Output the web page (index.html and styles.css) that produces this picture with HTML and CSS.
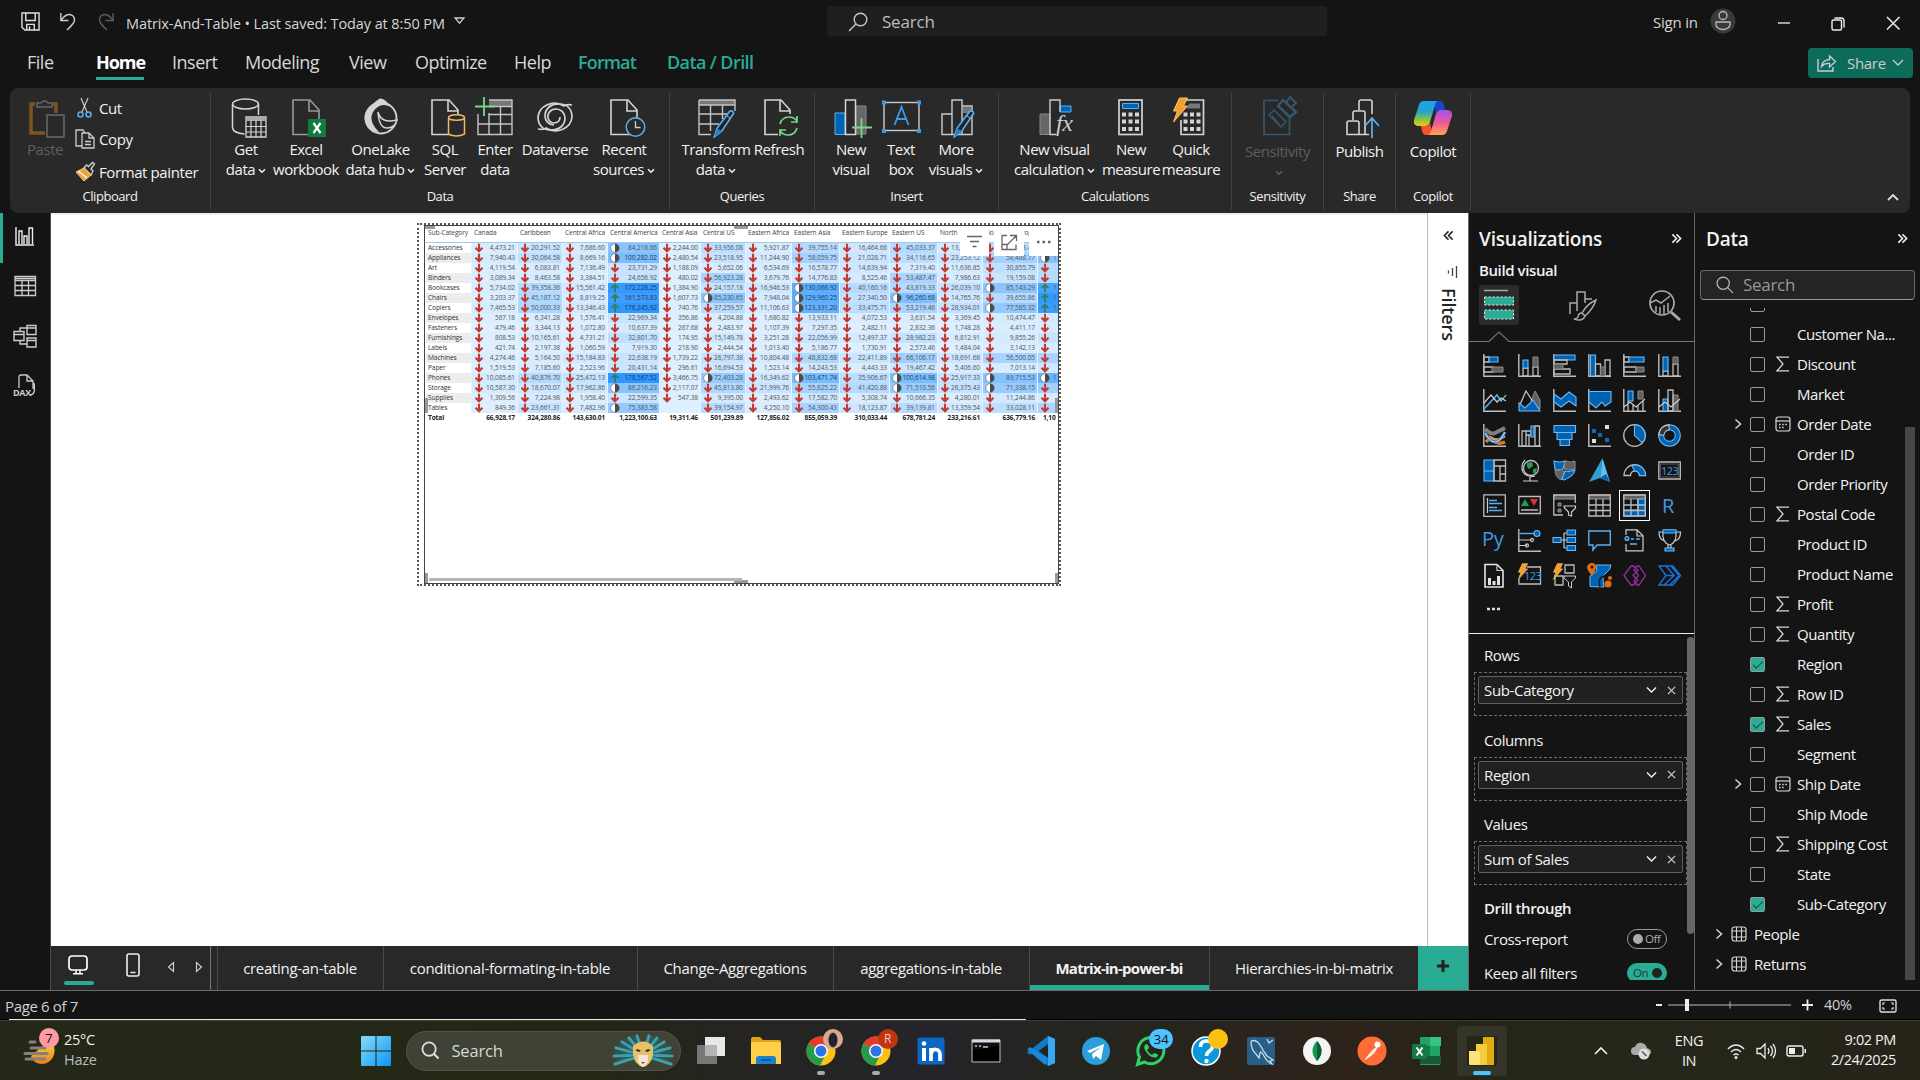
FILE: index.html
```html
<!DOCTYPE html>
<html lang="en">
<head>
<meta charset="utf-8">
<title>Matrix-And-Table</title>
<link rel="stylesheet" href="styles.css">
</head>
<body>
<svg class="defs" aria-hidden="true">
  <symbol id="doc" viewBox="0 0 40 40"><path d="M7 2h17l9 10v24.500H7zM23 2v11h10" fill="none" stroke="currentColor" stroke-width="1.600"/></symbol>
  <symbol id="chev" viewBox="0 0 8 6"><path d="M1 1.300l3 3 3-3" fill="none" stroke="currentColor" stroke-width="1.500"/></symbol>
  <symbol id="chevthin" viewBox="0 0 12 8"><path d="M1 1.300l5 5 5-5" fill="none" stroke="currentColor" stroke-width="1.500"/></symbol>
  <symbol id="sigma" viewBox="0 0 16 16"><path d="M14 1.200H2l6 6.800-6 6.800h12" fill="none" stroke="#d6d6d6" stroke-width="1.300"/></symbol>
  <symbol id="cal" viewBox="0 0 16 16"><rect x="1" y="1" width="14" height="14" rx="2.500" fill="none" stroke="#d6d6d6" stroke-width="1.200"/><path d="M1 5h14" stroke="#d6d6d6" stroke-width="1.200"/><path d="M4 8.500h8M4 11.500h6" stroke="#d6d6d6" stroke-width="1.500" stroke-dasharray="1.600 1.500"/></symbol>
  <symbol id="tbl" viewBox="0 0 16 16"><rect x="1" y="1" width="14" height="14" rx="2.500" fill="none" stroke="#d6d6d6" stroke-width="1.200"/><path d="M1 5h14M1 11h14M5.500 1v14M10.500 1v14" stroke="#d6d6d6" stroke-width="1.100"/></symbol>
  <symbol id="right" viewBox="0 0 8 12"><path d="M1.500 1.500L6.500 6l-5 4.500" fill="none" stroke="#d6d6d6" stroke-width="1.500"/></symbol>
  <symbol id="dbl" viewBox="0 0 12 12"><path d="M1.500 1.500L6 6l-4.500 4.500M6 1.500L10.500 6 6 10.500" fill="none" stroke="currentColor" stroke-width="1.700"/></symbol>
  <symbol id="x" viewBox="0 0 10 10"><path d="M1 1l8 8M9 1L1 9" stroke="#d0d0d0" stroke-width="1.300"/></symbol>
  <symbol id="axis" viewBox="0 0 23 23"><path d="M.8 0v22.200H23" fill="none" stroke="#bdbdbd" stroke-width="1.400"/></symbol>
  <symbol id="pencil" viewBox="0 0 20 27"><path d="M1 26l2.500-8L15 2.500Q18 .5 19 4L8 20.500z" fill="#222" stroke="#5ab0ee" stroke-width="1.500"/><path d="M1 26l2.500-8L8 20.500z" fill="#1d7fd0"/><path d="M12 6l4 3" stroke="#5ab0ee"/></symbol>
  <symbol id="bolt" viewBox="0 0 16 26"><path d="M7 1h8l-4 8h4L1 25l4-11H1z" fill="#f0a030" stroke="#ffc56b" stroke-width="1"/></symbol>
  <symbol id="down" viewBox="0 0 10 10"><path d="M5 .8v7.500M1.500 4.800L5 8.300l3.500-3.500" fill="none" stroke="#c23a31" stroke-width="2.100"/></symbol>
  <symbol id="up" viewBox="0 0 10 10"><path d="M5 9.200V1.700M1.500 5.200L5 1.700l3.500 3.500" fill="none" stroke="#2f8055" stroke-width="1.800"/></symbol>
  <symbol id="half" viewBox="0 0 10 10"><circle cx="5" cy="5" r="4.300" fill="#fff" stroke="#666" stroke-width=".6"/><path d="M5 .7a4.300 4.300 0 0 1 0 8.600z" fill="#4a4a4a"/></symbol>
  <symbol id="chrome" viewBox="0 0 30 30"><circle cx="15" cy="15" r="14.500" fill="#fbc116"/><path d="M15 15L2.400 7.700A14.500 14.500 0 0 1 27.600 7.700z" fill="#e33b2e"/><path d="M15 15L2.400 7.700A14.500 14.500 0 0 0 14 29.500l6-12z" fill="#259b4d"/><circle cx="15" cy="15" r="7" fill="#fff"/><circle cx="15" cy="15" r="5.500" fill="#2a74e8"/></symbol>
</svg>

<header class="titlebar">
  <svg class="t-save" viewBox="0 0 20 20"><path d="M1 1h18v18H4l-3-3zM5 1v8h10V1M6 19v-6h8v6M9 15v4" fill="none" stroke="#ddd" stroke-width="1.500"/></svg>
  <svg class="t-undo" viewBox="0 0 18 20"><path d="M1.500 1v8h8M1.500 9C5 3 10 1 14 4c5 5-1 10-6 15" fill="none" stroke="#ccc" stroke-width="1.500"/></svg>
  <svg class="t-undo flip" viewBox="0 0 18 20"><path d="M1.500 1v8h8M1.500 9C5 3 10 1 14 4c5 5-1 10-6 15" fill="none" stroke="#5e5e5e" stroke-width="1.500"/></svg>
  <span class="t-name">Matrix-And-Table • Last saved: Today at 8:50 PM</span>
  <svg class="t-tri" viewBox="0 0 10 7"><path d="M1 .8h8L5 5.500z" fill="none" stroke="#ccc" stroke-width="1.200"/></svg>
  <div class="t-search"><svg viewBox="0 0 20 20"><circle cx="12.500" cy="7.500" r="6.300" fill="none" stroke="#c8c8c8" stroke-width="1.400"/><path d="M8 12l-7 7" stroke="#c8c8c8" stroke-width="1.400"/></svg>Search</div>
  <span class="t-sign">Sign in</span>
  <svg class="t-user" viewBox="0 0 26 26"><circle cx="13" cy="13" r="12.500" fill="#3a3a3a"/><circle cx="13" cy="7.500" r="4" fill="none" stroke="#bbb" stroke-width="1.300"/><path d="M6 14h14v2.500a7 5 0 0 1-14 0z" fill="none" stroke="#bbb" stroke-width="1.300"/></svg>
  <svg class="t-win" viewBox="0 0 124 16"><path d="M1 8h12" stroke="#eee" stroke-width="1.300"/><rect x="55" y="5" width="9.500" height="10" rx="1.500" fill="none" stroke="#eee" stroke-width="1.400"/><path d="M57.500 3h6.500q3 0 3 3v6.500" fill="none" stroke="#eee" stroke-width="1.400"/><path d="M110 2l12.500 12.500M122.500 2L110 14.500" stroke="#eee" stroke-width="1.500"/></svg>
</header>

<nav class="menubar">
  <span class="m-file">File</span><span class="m-home">Home</span><span class="m-insert">Insert</span><span class="m-modeling">Modeling</span><span class="m-view">View</span><span class="m-opt">Optimize</span><span class="m-help">Help</span><span class="m-format">Format</span><span class="m-drill">Data / Drill</span>
  <div class="share"><svg viewBox="0 0 20 18"><path d="M1 5v12h15v-4" fill="none" stroke="#ccd" stroke-width="1.400"/><path d="M4.500 12.500q1-6.500 8-7V2l6 5.500-6 5.500V9.500q-5-.5-8 3z" fill="none" stroke="#ccd" stroke-width="1.300"/></svg>Share<svg class="sh-chev" viewBox="0 0 12 8"><path d="M1 1l5 5 5-5" fill="none" stroke="#ccc" stroke-width="1.300"/></svg></div>
</nav>

<section class="ribbon">
  <div class="group g-clip">
    <div class="clip">
      <div class="rb dim"><svg viewBox="0 0 40 40"><path d="M10 6H6v29h14M28 6h3v9" fill="none" stroke="#7c5420" stroke-width="3.500"/><path d="M12 9V5h4a4 4 0 0 1 7 0h4v4z" fill="#2b2b2b" stroke="#666" stroke-width="1.500"/><rect x="22" y="17" width="17" height="22" fill="#292929" stroke="#666" stroke-width="1.600"/></svg><span>Paste</span></div>
      <div class="clip-list">
        <div><svg viewBox="0 0 20 20"><path d="M6 0l6 14M13 0L7 14" stroke="#ccc" stroke-width="1.200"/><circle cx="5.500" cy="16.500" r="2.500" fill="none" stroke="#5ab0ee" stroke-width="1.500"/><circle cx="13.500" cy="16.500" r="2.500" fill="none" stroke="#5ab0ee" stroke-width="1.500"/></svg>Cut</div>
        <div><svg viewBox="0 0 20 20"><path d="M7 17H1V1h7l2 3" fill="none" stroke="#ccc" stroke-width="1.300"/><path d="M7 4h7l5 5v10H7zM14 4v5h5M10 12.500h6M10 15.500h6" fill="none" stroke="#ccc" stroke-width="1.300"/></svg>Copy</div>
        <div><svg viewBox="0 0 20 20"><path d="M9 6l7 7 2-4-2-2 3.500-5-2-1.500-4 4-2-1.500z" fill="none" stroke="#ccc" stroke-width="1.400"/><path d="M9 6l7 7-7 6-8-9z" fill="#e8a33c" stroke="#f5cf86"/><path d="M3 9l9 7" stroke="#fbe6b8" stroke-width="2"/></svg>Format painter</div>
      </div>
    </div>
    <footer>Clipboard</footer>
  </div>
  <div class="group g-data">
    <div class="btns">
      <div class="rb"><svg viewBox="0 0 40 40"><g fill="none" stroke="#d4d4d4" stroke-width="1.500"><ellipse cx="19.500" cy="6" rx="13" ry="5"/><path d="M6.500 6v24q1 5 12 6M32.500 6v11"/></g><path d="M20 19h20v20H20z" fill="#292929" stroke="#d4d4d4" stroke-width="1.300"/><path d="M20 21h20" stroke="#aaa" stroke-width="4"/><path d="M20 28.500h20M20 34h20M25 22v17M30 22v17M35 22v17" stroke="#d4d4d4" stroke-width="1.200"/></svg><span>Get<br>data<svg class="chev"><use href="#chev"/></svg></span></div>
      <div class="rb"><svg viewBox="0 0 40 40"><use href="#doc" color="#999"/><rect x="22" y="21" width="18" height="18" fill="#107c41"/><path d="M27.500 25l7 10M34.500 25l-7 10" stroke="#fff" stroke-width="2.200"/></svg><span>Excel<br>workbook</span></div>
      <div class="rb"><svg viewBox="0 0 40 40"><circle cx="20" cy="20" r="15.500" fill="none" stroke="#d4d4d4" stroke-width="1.800"/><path d="M12 6Q18 0 20 .500q6 1 8 8Q19 4 12 14q-5 9 6 20Q5 34 3.500 20 4 11 12 6z" fill="#d4d4d4"/><path d="M17 14q1 16 9 16t10-8Q20 26 17 14z" fill="#292929" stroke="#d4d4d4" stroke-width="1.500"/></svg><span>OneLake<br>data hub<svg class="chev"><use href="#chev"/></svg></span></div>
      <div class="rb"><svg viewBox="0 0 40 40"><use href="#doc" color="#d4d4d4"/><path d="M23.500 20v16q8 4 16 0V20" fill="#292929" stroke="#f0b56a" stroke-width="1.500"/><ellipse cx="31.500" cy="19.500" rx="8" ry="2.800" fill="#292929" stroke="#f0b56a" stroke-width="1.500"/></svg><span>SQL<br>Server</span></div>
      <div class="rb"><svg viewBox="0 0 40 40"><path d="M14 2h23v6H14z" fill="#777"/><path d="M14 2h23v34.500H3V16M14 8.500h23M14 16.500h23M3 26h34M14 15v21.500M25.500 8v28" fill="none" stroke="#c4c4c4" stroke-width="1.400"/><path d="M9-1v19M0 8.500h19" stroke="#76d883" stroke-width="1.800"/></svg><span>Enter<br>data</span></div>
      <div class="rb"><svg viewBox="0 0 40 40"><g fill="none" stroke="#d4d4d4" stroke-width="1.700"><path d="M37 7q-6-1-8 1C18 1 4 8 3 19c0 8 5 13 12 13 9 1 15-5 15-12 0-5-4-9-9-9-6 0-9 5-8 9 1 3 3 5 6 5 4 0 6-3 6-6"/><path d="M3 31q6 1 8-1c11 7 25 0 26-11 0-8-5-13-12-13-9-1-15 5-15 12 0 5 4 9 9 9"/></g></svg><span>Dataverse</span></div>
      <div class="rb"><svg viewBox="0 0 40 40"><use href="#doc" color="#d4d4d4"/><circle cx="31.500" cy="29" r="9.300" fill="#292929" stroke="#5ab0ee" stroke-width="1.500"/><path d="M31.500 23v6.500h5" fill="none" stroke="#ccc" stroke-width="1.300"/></svg><span>Recent<br>sources<svg class="chev"><use href="#chev"/></svg></span></div>
    </div>
    <footer>Data</footer>
  </div>
  <div class="group g-query">
    <div class="btns">
      <div class="rb"><svg viewBox="0 0 40 40"><path d="M3 2h36v5H3z" fill="#777"/><path d="M3 2h36v5M3 2v34.500h12M3 7h36v6M3 16h29M3 26h20M14.500 7v26M26.500 7v14" fill="none" stroke="#c4c4c4" stroke-width="1.400"/><use href="#pencil" x="14" y="11" width="28" height="29"/></svg><span>Transform<br>data<svg class="chev"><use href="#chev"/></svg></span></div>
      <div class="rb"><svg viewBox="0 0 40 40"><path d="M19 36.500H6V2h16l9 10v4M21 2v11h10" fill="none" stroke="#d4d4d4" stroke-width="1.600"/><path d="M21 26q2-7 9-7 5 0 8 4v-5m0 6h-6M38 30q-2 7-9 7-5 0-8-4v5m0-6h6" fill="none" stroke="#76d883" stroke-width="1.700"/></svg><span>Refresh</span></div>
    </div>
    <footer>Queries</footer>
  </div>
  <div class="group g-insert">
    <div class="btns">
      <div class="rb"><svg viewBox="0 0 40 40"><path d="M4 15h10v21.500H4z" fill="#0063b1" stroke="#5ab0ee"/><path d="M25 8h10v28H25z" fill="#666" stroke="#888"/><path d="M14.500 2h10v34.500h-10z" fill="#292929" stroke="#d4d4d4" stroke-width="1.500"/><path d="M30.500 20v20M21 29.500h20" stroke="#76d883" stroke-width="1.800"/></svg><span>New<br>visual</span></div>
      <div class="rb"><svg viewBox="0 0 40 40"><rect x="3" y="4.500" width="35" height="28" fill="none" stroke="#ccc" stroke-width="1.400"/><path d="M1 2.500h4v4H1zM36 2.500h4v4h-4zM1 31h4v4H1zM36 31h4v4h-4z" fill="#3c9be6"/><path d="M13.500 27L20.500 9l7 18M16 21h9" fill="none" stroke="#3c9be6" stroke-width="1.800"/></svg><span>Text<br>box</span></div>
      <div class="rb"><svg class="shift" viewBox="0 0 40 40"><path d="M4 16h10v20.500H4zM14 2h10v34.500H14zM24 8h10v28.500H24" fill="none" stroke="#ccc" stroke-width="1.400"/><path d="M25 9h8v6h-8z" fill="#777"/><use href="#pencil" x="12" y="11" width="28" height="29"/></svg><span>More<br>visuals<svg class="chev"><use href="#chev"/></svg></span></div>
    </div>
    <footer>Insert</footer>
  </div>
  <div class="group g-calc">
    <div class="btns">
      <div class="rb"><svg viewBox="0 0 40 40"><path d="M5 16h10v20.500H5z" fill="#666" stroke="#888"/><path d="M25 8h11v6H25z" fill="#0063b1" stroke="#5ab0ee"/><path d="M25 14V2H15v34.500h6" fill="none" stroke="#ccc" stroke-width="1.400"/><text x="21" y="33" class="fx">fx</text></svg><span>New visual<br>calculation<svg class="chev"><use href="#chev"/></svg></span></div>
      <div class="rb"><svg viewBox="0 0 40 40"><rect x="8" y="2" width="23" height="34.500" fill="none" stroke="#d4d4d4" stroke-width="1.700"/><path d="M11.500 5.500h16v5h-16z" fill="#0063b1" stroke="#5ab0ee"/><path d="M11 16.500h18M11 23.500h18M11 31h18" stroke="#d4d4d4" stroke-width="4" stroke-dasharray="4 2.500"/></svg><span>New<br>measure</span></div>
      <div class="rb"><svg viewBox="0 0 40 40"><path d="M15 2h17.500v34.500H10V22" fill="none" stroke="#d4d4d4" stroke-width="1.700"/><path d="M18 5.500h11v5H16z" fill="#777"/><path d="M12.500 16.500h18M12.500 23.500h18M12.500 31h18" stroke="#d4d4d4" stroke-width="4" stroke-dasharray="4 2.500"/><use href="#bolt" x="1" y="-1" width="17" height="26"/></svg><span>Quick<br>measure</span></div>
    </div>
    <footer>Calculations</footer>
  </div>
  <div class="group g-sens">
    <div class="btns">
      <div class="rb dim low"><svg viewBox="0 0 40 40"><path d="M21 2.500H7v34h25.500V20" fill="none" stroke="#35566d" stroke-width="1.700"/><path d="M12 17l5-5 12 12-5 5zM15 18l7 8" fill="none" stroke="#35566d" stroke-width="1.500"/><path d="M21 8l5-6 13 12-6 5z" fill="none" stroke="#35566d" stroke-width="2.500"/><path d="M29 5l4-6 6 6-5 5" fill="none" stroke="#35566d" stroke-width="2"/></svg><span>Sensitivity<br><svg class="chev"><use href="#chev"/></svg></span></div>
    </div>
    <footer>Sensitivity</footer>
  </div>
  <div class="group g-share">
    <div class="btns">
      <div class="rb low"><svg viewBox="0 0 40 40"><g fill="none" stroke="#d4d4d4" stroke-width="1.600"><path d="M29 36.500H7V25q0-2 2-2h8q2 0 2 2v11M13 22v-7q0-2 2-2h8q2 0 2 2v21M19 12V4q0-2 2-2h9q2 0 2 2v12"/></g><path d="M32 40V20M25 28l7-8 7 8" fill="none" stroke="#5ab0ee" stroke-width="1.700"/></svg><span>Publish</span></div>
    </div>
    <footer>Share</footer>
  </div>
  <div class="group g-cop">
    <div class="btns">
      <div class="rb low"><svg viewBox="0 0 40 40"><defs><linearGradient id="c1" x1="0" y1="0" x2="0" y2="1"><stop offset="0" stop-color="#18a4f0"/><stop offset=".45" stop-color="#2ba3c9"/><stop offset=".75" stop-color="#8cc63f"/><stop offset="1" stop-color="#f2c811"/></linearGradient><linearGradient id="c2" x1="0" y1="0" x2="0" y2="1"><stop offset="0" stop-color="#9a55f0"/><stop offset=".5" stop-color="#f0569a"/><stop offset="1" stop-color="#ffa64c"/></linearGradient></defs><path d="M20 3h7q3 0 4 4l1 5h-4q-4 0-5 3z" fill="#1746c8"/><path d="M20 37h-7q-3 0-4-4l-1-5h5q3 0 4-3z" fill="#f5532d"/><path d="M11 3h14q-2 0-3 4l-5 17q-1 4-5 4H6q-6 0-5-6L6 7q1-4 5-4z" fill="url(#c1)"/><path d="M29 37H15q2 0 3-4l5-17q1-4 5-4h6q6 0 5 6l-5 15q-1 4-5 4z" fill="url(#c2)"/></svg><span>Copilot</span></div>
    </div>
    <footer>Copilot</footer>
  </div>
  <div class="ribbon-end"><svg viewBox="0 0 12 8"><path d="M1 7l5-5 5 5" fill="none" stroke="#ddd" stroke-width="1.800"/></svg></div>
</section>

<main class="work">
  <aside class="rail">
    <div class="on"><svg viewBox="0 0 24 24"><path d="M3 3v18h18M6 20V7h3v13M11 20v-8h3v8M16 20V4h3.500v16" fill="none" stroke="#eee" stroke-width="1.400"/></svg></div>
    <div><svg viewBox="0 0 24 24"><path d="M2 2.500h20.500v19H2zM2 6.500h20M2 11.500h20M2 16.500h20M9 6.500v15M15.500 6.500v15M2 4.500h20" fill="none" stroke="#ccc" stroke-width="1.300"/></svg></div>
    <div><svg viewBox="0 0 24 24"><path d="M1 7.500h10v9H1zM14 1.500h9v9h-9zM14 14h9v9h-9zM1 10.500h10M14 4h9M14 16.500h9M7 7.500V4h7M7 16.500V20h7" fill="none" stroke="#ccc" stroke-width="1.400"/></svg></div>
    <div><svg viewBox="0 0 24 24"><path d="M6 14V3q0-2 2-2h6l6 6v8M14 1v6h6M21 9q2 12-4 12" fill="none" stroke="#ccc" stroke-width="1.300"/><text x="0" y="21.500" class="dax">DAX</text></svg></div>
  </aside>
  <div class="center">
    <div class="stage">
      <div class="canvas">
        <div class="visual">
          <div class="frame">
            <table class="matrix"><colgroup></colgroup><thead></thead><tbody></tbody></table>
            <i class="h tl"></i><i class="h tc"></i><i class="h ml"></i><i class="h mr"></i><i class="h bl"></i><i class="h bc"></i><i class="h br"></i><i class="hbar"></i>
            <div class="vtools">
              <span><svg viewBox="0 0 30 30"><path d="M7 10.500h15M10 15.500h9M12.500 20.500h4" stroke="#666" stroke-width="1.300"/></svg></span>
              <span><svg viewBox="0 0 30 30"><path d="M13 9.500H8v14h14v-5M8 18.500h5v5M16 9.500h6.500V15M22.500 9.500l-9 9" fill="none" stroke="#666" stroke-width="1.300"/></svg></span>
              <span><svg viewBox="0 0 30 30"><path d="M8 16h2.500M13.500 16H16M19 16h2.500" stroke="#666" stroke-width="2.500"/></svg></span>
            </div>
          </div>
        </div>
      </div>
      <aside class="filters"><svg class="f-col" viewBox="0 0 12 12"><use href="#dbl"/></svg><svg class="f-ico" viewBox="0 0 12 12"><path d="M10.500 0v12M6.500 2v8M2.500 4.500v3" stroke="#444" stroke-width="1.300"/></svg><b>Filters</b></aside>
    </div>
    <div class="tabs">
      <div class="views">
        <svg class="v-desk" viewBox="0 0 20 20"><rect x="1" y="1" width="18" height="14" rx="3" fill="none" stroke="#fff" stroke-width="1.700"/><path d="M5 18.700h10M8 15v3M12 15v3" stroke="#fff" stroke-width="1.500"/></svg>
        <svg class="v-phone" viewBox="0 0 14 24"><rect x="1" y="1" width="12" height="22" rx="2" fill="none" stroke="#eee" stroke-width="1.600"/><path d="M4.500 19.500h5" stroke="#eee" stroke-width="1.500"/></svg>
        <svg class="v-arr" viewBox="0 0 36 12"><path d="M6.500 1.500v9L1.500 6zM29.500 1.500v9l5-4.500z" fill="none" stroke="#ccc" stroke-width="1.200"/></svg>
      </div>
      <div class="tab">creating-an-table</div><div class="tab">conditional-formating-in-table</div><div class="tab">Change-Aggregations</div><div class="tab">aggregations-in-table</div><div class="tab active">Matrix-in-power-bi</div><div class="tab">Hierarchies-in-bi-matrix</div>
      <div class="add"><svg viewBox="0 0 14 14"><path d="M7 1v12M1 7h12" stroke="#222" stroke-width="3"/></svg></div>
    </div>
  </div>

  <aside class="viz">
    <div class="p-head"><h2>Visualizations</h2><svg><use href="#dbl"/></svg></div>
    <h3>Build visual</h3>
    <div class="modes">
      <div class="on"><svg viewBox="0 0 40 40"><path d="M5 5.500h24" stroke="#aaa" stroke-width="1.500"/><path d="M5.500 12h29v8h-29zM5.500 25h29v9h-29z" fill="#2aac94" stroke="#ddd" stroke-dasharray="2.500 1.500"/></svg></div>
      <div><svg viewBox="0 0 40 40"><path d="M7 29V18h7M14 26V7h8v11M22 14h7" fill="none" stroke="#aaa" stroke-width="1.500"/><path d="M33 15q-9 4-14 13l3 3q8-7 11-16zM19 28q-4 0-4 4-1 2-4 2 9 3 11-3" fill="#141414" stroke="#aaa" stroke-width="1.500"/></svg></div>
      <div><svg viewBox="0 0 40 40"><circle cx="17" cy="18" r="12" fill="none" stroke="#aaa" stroke-width="1.700"/><path d="M26 27l9 8" stroke="#aaa" stroke-width="3"/><path d="M5 18l6-3 5 3 9-7M11 27v-6M15 29v-7M19 29v-9M23 27v-9" fill="none" stroke="#aaa" stroke-width="1.500"/></svg></div>
    </div>
    <svg class="notch" viewBox="0 0 225 12"><path d="M0 10.500h20L30 1l10 9.500h185" fill="none" stroke="#777" stroke-width="1.100"/></svg>
    <div class="gallery">
      <svg viewBox="0 0 23 23"><use href="#axis"/><path class="o" d="M1 3h5v5H1zM1 13h9v5H1z"/><path class="b" d="M6 3h9v5H6z"/><path class="g" d="M9 13h11v5H9z"/></svg>
      <svg viewBox="0 0 23 23"><use href="#axis"/><path class="o" d="M5 14h5v8H5zM15 13h5v9h-5z"/><path class="b" d="M5 6h5v8H5z"/><path class="g" d="M15 3h5v10h-5z"/></svg>
      <svg viewBox="0 0 23 23"><use href="#axis"/><path class="b" d="M1 1h21v5H1z"/><path class="o" d="M1 6h13v4H1zM1 15h16v5H1z"/><path class="g" d="M1 10h9v5H1z"/></svg>
      <svg viewBox="0 0 23 23"><use href="#axis"/><path class="b" d="M2.500 1h5v21h-5z"/><path class="o" d="M7.500 10h5v12h-5zM17 6h5v16h-5z"/><path class="g" d="M12.500 13H17v9h-4.500z"/></svg>
      <svg viewBox="0 0 23 23"><use href="#axis"/><path class="o" d="M1 3h5v5H1zM1 13h12v5H1z"/><path class="b" d="M6 3h15v5H6z"/><path class="g" d="M13 13h8v5h-8z"/></svg>
      <svg viewBox="0 0 23 23"><use href="#axis"/><path class="o" d="M5 17h5v5H5zM15 10h5v12h-5z"/><path class="b" d="M5 3h5v14H5z"/><path class="g" d="M15 3h5v7h-5z"/></svg>

      <svg viewBox="0 0 23 23"><use href="#axis"/><path class="lb" d="M1 20l13-14 4 6 5-6"/><path class="lo" d="M1 14l7-8 6 7 4-4 5 3"/></svg>
      <svg viewBox="0 0 23 23"><path class="g" d="M17 2l5 9v9l-9-8z"/><path class="lo" d="M1 18L8 2l11 17"/><path class="b" d="M1 14l6 5 8-8 7 11H1z"/></svg>
      <svg viewBox="0 0 23 23"><use href="#axis"/><path class="b" d="M1 5l7 5 8-7 7 5v9l-7-5-8 6-7-5z"/></svg>
      <svg viewBox="0 0 23 23"><use href="#axis"/><path class="b" d="M1 2.500h22V13l-6 4-3-4-6 6-7-6z"/></svg>
      <svg viewBox="0 0 23 23"><use href="#axis"/><path class="b" d="M5 2h5v10H5z"/><path class="g" d="M15 2h5v8h-5z"/><path class="lo" d="M1 18l6-5 6 5 9-8M5 12v10M10 16v6M15 17v5M20 12v10"/></svg>
      <svg viewBox="0 0 23 23"><use href="#axis"/><path class="b" d="M5 10h5v12H5z"/><path class="g" d="M15 6h5v16h-5z"/><path class="o" d="M10 1h5v21h-5z"/><path class="lo" d="M1 18l6-5 6 5 9-8"/></svg>

      <svg viewBox="0 0 23 23"><use href="#axis"/><path d="M3 18q4-5 8-1t11 1" fill="none" stroke="#e67a14" stroke-width="3.500"/><path d="M3 12q4 1 8 3t11-3" fill="none" stroke="#f0a04a" stroke-width="2.500"/><path d="M2 5q6 6 10 4t10-5" fill="none" stroke="#808080" stroke-width="4"/><path d="M2 9q5 9 10 9t10-10" fill="none" stroke="#2880d0" stroke-width="3"/><path class="lo" d="M2 9q5 9 10 9t10-10"/></svg>
      <svg viewBox="0 0 23 23"><use href="#axis"/><path class="o" d="M4 7h4v15H4zM8 7h5v4H8zM17 2h4.500v20H17zM8 11h3v11"/><path class="b" d="M13 2h3v11h-3z"/></svg>
      <svg viewBox="0 0 23 23"><path class="b" d="M1 1.500h21.500v7H1zM4 8.500h15v7H4zM7 15.500h9.500v6H7z"/></svg>
      <svg viewBox="0 0 23 23"><use href="#axis"/><path d="M17 1h4v4h-4zM4 15h4v4H4z" fill="#ddd"/><path d="M4 5h4v4H4zM10 9h4v4h-4zM17 14h4v4h-4z" fill="#0a6ac0"/></svg>
      <svg viewBox="0 0 23 23"><circle class="o" cx="11.500" cy="11.500" r="10.800"/><path class="b" d="M11.500 11.500V.8a10.700 10.700 0 0 1 7.700 18z"/></svg>
      <svg viewBox="0 0 23 23"><circle cx="11.500" cy="11.500" r="8.300" fill="none" stroke="#6cb8f6" stroke-width="6"/><circle cx="11.500" cy="11.500" r="8.300" fill="none" stroke="#0063b1" stroke-width="4"/><path d="M3.200 11.500a8.300 8.300 0 0 1 8.300-8.300" fill="none" stroke="#ccc" stroke-width="6"/><path d="M3.500 10.500a8.300 8.300 0 0 1 7-7" fill="none" stroke="#333" stroke-width="4"/></svg>

      <svg viewBox="0 0 23 23"><path class="b" d="M1 1h10v11H1zM1 12h10v10H1z"/><path class="o" d="M11 1h11.500v6H11zM11 7h6v15h-6zM17 7h5.500v8H17zM17 15h5.500v7H17z"/></svg>
      <svg viewBox="0 0 23 23"><circle class="o" cx="13" cy="9" r="7.500"/><path d="M9 4l5-1 1 4-4 3-2-2zM15 10l4-1-1 5h-3z" fill="#269e4a"/><path class="lo" d="M7 1q-5 5-2 12 4 6 12 4M12 18v4M5 22h15"/></svg>
      <svg viewBox="0 0 23 23"><path class="b" d="M1 2q6 2 11 0l-2 8q-6 2-8 0z"/><path class="g" d="M12 2q6 2 10 0v8q-6 2-11 0zM2 11q4 2 7-1l3 5-4 6Q2 18 2 11z"/><path class="b" d="M12 12q5 1 10-1-1 6-11 10l-2-1z"/></svg>
      <svg viewBox="0 0 23 23"><path d="M14.500-1L1 23l11-4z" fill="#2f9fd0"/><path d="M14.500-1L22 23l-10-4z" fill="#5cc0ea"/><path d="M12 19l10 4-4-8z" fill="#0f5fa8"/></svg>
      <svg viewBox="0 0 23 23"><path class="o" d="M1 16.500a10.500 10.500 0 0 1 21.500 0h-6a4.500 4.500 0 0 0-9 0z"/><path class="b" d="M9 6.500a10.500 10.500 0 0 1 13.500 10h-6a4.500 4.500 0 0 0-5-4.500z"/></svg>
      <svg viewBox="0 0 23 23"><path class="o" d="M.8 3h21.500v17H.8z"/><path d="M2.500 5h18v13h-18z" fill="none" stroke="#555"/><text x="3" y="15.500" class="n">123</text></svg>

      <svg viewBox="0 0 23 23"><path class="o" d="M.8.800h21.500v21.500H.8z"/><path class="lo" d="M4.500 4v15"/><path class="lb" d="M6 6.500h8M6 9.500h13M6 13.500h8M6 16.500h13"/></svg>
      <svg viewBox="0 0 23 23"><path class="o" d="M.8 2.500h21.500v17H.8zM3 16h17"/><path d="M3 12l4-7 4 7z" fill="#1ea050"/><path d="M12 5h8l-4 7z" fill="#d83535"/></svg>
      <svg viewBox="0 0 23 23"><path class="g" d="M.8 1h21.500v4H.8z"/><path class="o" d="M10 21H.8V1h21.500v8"/><path class="g" d="M5 9h3v3H5zM5 15h3v3H5z"/><path class="lo" d="M11 12h11.500v2l-4 4v4l-3-1v-3l-4-4z"/></svg>
      <svg viewBox="0 0 23 23"><path class="g" d="M.8 1h21.500v4H.8z"/><path class="o" d="M.8 1h21.500v21H.8zM.8 11h21.500M.8 16.500h21.500M8 5v17M15 5v17"/></svg>
      <svg class="sel" viewBox="0 0 23 23"><path class="g" d="M.8 1h21.500v4H.8z"/><path class="b" d="M.8 16h14V5h7.500v17H.8z"/><path class="o" d="M.8 1h21.500v21H.8zM.8 11h21.500M.8 16.500h21.500M8 5v17M15 5v17"/></svg>
      <svg viewBox="0 0 23 23"><text x="4" y="18.500" class="big">R</text></svg>

      <svg class="wide" viewBox="0 0 23 23"><text x="-1" y="17" class="big">Py</text></svg>
      <svg viewBox="0 0 23 23"><use href="#axis"/><path class="lb" d="M2 4.500h14"/><path class="lo" d="M1 11h12M1 16.500h8"/><circle class="b" cx="19" cy="4.500" r="3"/><circle class="o" cx="14" cy="11" r="1.500"/><circle class="o" cx="9" cy="16.500" r="1.500"/></svg>
      <svg viewBox="0 0 23 23"><path class="lo" d="M8 11h6M11 4v15M11 4h4M11 19h4"/><path class="b" d="M0 8.500h8v5H0zM14 1h8.500v5H14zM14 8.500h8.500v5H14zM14 16.500h8.500v5H14z"/></svg>
      <svg viewBox="0 0 23 23"><path class="lb" d="M.8 2h21.500v14H9l-4 5v-5H.8z"/></svg>
      <svg viewBox="0 0 23 23"><path class="lo" d="M3 6V.8h11l6 6v15H3V15M14 1v6h6"/><path class="lb" d="M8 10h3m2 0h4M7 15h7"/><circle class="b" cx="4" cy="9.500" r="2"/></svg>
      <svg viewBox="0 0 23 23"><path class="lo" d="M5 3H1q0 8 6 9M18 3h4.500q0 8-6 9M5 3q-1 11 6.500 13Q19 14 18 3M10 16v3h3v-3"/><path class="b" d="M5 .8h13V4H5zM7 19h9v3H7z"/></svg>

      <svg viewBox="0 0 23 23"><path d="M2 .500h12l6 6V23H2z" fill="none" stroke="#e4e4e4" stroke-width="1.600"/><path class="lo" d="M14 .500v6h6"/><path d="M5 14h3v7H5zM9.500 17h3v4h-3zM14 12h3v9h-3z" fill="#e4e4e4"/></svg>
      <svg viewBox="0 0 23 23"><path class="o" d="M9 3h13.500v17H1v-5"/><text x="6" y="16" class="n">123</text><use href="#bolt" x="-1" y="-1" width="12" height="17"/></svg>
      <svg viewBox="0 0 23 23"><path class="o" d="M12 1h9v8h-9zM2 12h8v9H2z"/><use href="#bolt" x="-1" y="-1" width="12" height="17"/><path d="M11 12h11.500v2l-4 4v6l-3-2v-4l-4.500-4z" fill="#141414" stroke="#ccc"/></svg>
      <svg viewBox="0 0 23 23"><path d="M8 1h15q-1 6-5 8t-3 6l1 8-14-.500V12l7-5z" fill="#0063b1" stroke="#6cb8f6"/><path d="M12 23q-2-8 2-10 6-2 8-6" fill="none" stroke="#141414" stroke-width="1.500"/><path d="M4-1q4 0 4 4 0 3-4 9Q-1 6-1 3q1-4 5-4z" fill="#e66c0b"/><circle cx="4" cy="3" r="1.500" fill="#141414"/><circle cx="20" cy="20" r="3.500" fill="#e66c0b"/><circle cx="22" cy="14" r="2" fill="#e66c0b"/></svg>
      <svg viewBox="0 0 23 23"><path d="M8 2L1 11.500 8 21h2.500l4.500-5-5-4.500 5-5L10.500 2zM14 2l-3 4 4.500 5.500L11 17l3 4h2l6.500-9.500L16 2z" fill="none" stroke="#9a2fa0" stroke-width="1.300"/></svg>
      <svg viewBox="0 0 23 23"><path d="M1 2h14l7.500 9.500L15 21H1l7-9.500zM8 2l8 9.500L6 21M8 11.500h8M12 21l9-9.500M13 2l8 9.500" fill="none" stroke="#1673d6" stroke-width="1.400"/></svg>
      <svg viewBox="0 0 23 23"><path d="M4 10h3M9 10h3M14 10h3" stroke="#ddd" stroke-width="2.600"/></svg>
    </div>
    <div class="wells">
      <p>Rows</p>
      <div class="drop"><div>Sub-Category<svg class="c"><use href="#chevthin"/></svg><svg class="k"><use href="#x"/></svg></div></div>
      <p>Columns</p>
      <div class="drop"><div>Region<svg class="c"><use href="#chevthin"/></svg><svg class="k"><use href="#x"/></svg></div></div>
      <p>Values</p>
      <div class="drop"><div>Sum of Sales<svg class="c"><use href="#chevthin"/></svg><svg class="k"><use href="#x"/></svg></div></div>
      <p class="bold">Drill through</p>
      <div class="opt">Cross-report<span class="toggle"><i></i>Off</span></div>
      <div class="opt">Keep all filters<span class="toggle on">On<i></i></span></div>
      <i class="sbar"></i>
    </div>
  </aside>

  <aside class="data">
    <div class="p-head"><h2>Data</h2><svg><use href="#dbl"/></svg></div>
    <div class="d-search"><svg viewBox="0 0 20 20"><circle cx="8" cy="8" r="6.800" fill="none" stroke="#bbb" stroke-width="1.300"/><path d="M13 13l6 6" stroke="#bbb" stroke-width="1.300"/></svg>Search</div>
    <div class="fields">
      <div class="fld"><i class="cb"></i></div>
      <div class="fld"><i class="cb"></i><span>Customer Na...</span></div>
      <div class="fld"><i class="cb"></i><svg><use href="#sigma"/></svg><span>Discount</span></div>
      <div class="fld"><i class="cb"></i><span>Market</span></div>
      <div class="fld"><svg class="ex"><use href="#right"/></svg><i class="cb"></i><svg><use href="#cal"/></svg><span>Order Date</span></div>
      <div class="fld"><i class="cb"></i><span>Order ID</span></div>
      <div class="fld"><i class="cb"></i><span>Order Priority</span></div>
      <div class="fld"><i class="cb"></i><svg><use href="#sigma"/></svg><span>Postal Code</span></div>
      <div class="fld"><i class="cb"></i><span>Product ID</span></div>
      <div class="fld"><i class="cb"></i><span>Product Name</span></div>
      <div class="fld"><i class="cb"></i><svg><use href="#sigma"/></svg><span>Profit</span></div>
      <div class="fld"><i class="cb"></i><svg><use href="#sigma"/></svg><span>Quantity</span></div>
      <div class="fld"><i class="cb ck"></i><span>Region</span></div>
      <div class="fld"><i class="cb"></i><svg><use href="#sigma"/></svg><span>Row ID</span></div>
      <div class="fld"><i class="cb ck"></i><svg><use href="#sigma"/></svg><span>Sales</span></div>
      <div class="fld"><i class="cb"></i><span>Segment</span></div>
      <div class="fld"><svg class="ex"><use href="#right"/></svg><i class="cb"></i><svg><use href="#cal"/></svg><span>Ship Date</span></div>
      <div class="fld"><i class="cb"></i><span>Ship Mode</span></div>
      <div class="fld"><i class="cb"></i><svg><use href="#sigma"/></svg><span>Shipping Cost</span></div>
      <div class="fld"><i class="cb"></i><span>State</span></div>
      <div class="fld"><i class="cb ck"></i><span>Sub-Category</span></div>
      <div class="tab-row"><svg class="ex"><use href="#right"/></svg><svg><use href="#tbl"/></svg>People</div>
      <div class="tab-row"><svg class="ex"><use href="#right"/></svg><svg><use href="#tbl"/></svg>Returns</div>
      <i class="sbar"></i>
    </div>
  </aside>
</main>

<footer class="status"><span>Page 6 of 7</span>
  <svg class="zoomer" viewBox="0 0 160 20"><path d="M1 10h6M147 10h11M152.500 4.500v11" stroke="#eee" stroke-width="1.800"/><path d="M13 10h123M75 6.500v7" stroke="#bbb"/><path d="M30 4h4v12h-4z" fill="#eee"/></svg>
  <span class="pct">40%</span>
  <svg class="fit" viewBox="0 0 18 14"><rect x="1" y="1" width="16" height="12" rx="1.500" fill="none" stroke="#ddd" stroke-width="1.400"/><path d="M4 6V4h2M12 4h2v2M14 8v2h-2M6 10H4V8" fill="none" stroke="#ddd" stroke-width="1.200"/></svg>
</footer>

<footer class="taskbar">
  <div class="weather"><svg viewBox="0 0 36 36"><defs><linearGradient id="w" x1="0" y1="0" x2="0" y2="1"><stop offset="0" stop-color="#f5c53a"/><stop offset="1" stop-color="#f07a1a"/></linearGradient></defs><path d="M14 20q2-4 8-4h8q2 8-3 14-6 6-14 3-5-2-6-7z" fill="url(#w)"/><path d="M6 12h5M7 18h14M1 23.500h22M2 29h19" stroke="#85807a" stroke-width="3" stroke-linecap="round"/></svg><i class="badge pink">7</i><p>25°C<br><span>Haze</span></p></div>
  <svg class="k win" viewBox="0 0 29 29"><defs><linearGradient id="wl" x1="0" y1="0" x2="1" y2="1"><stop offset="0" stop-color="#86dcfb"/><stop offset="1" stop-color="#0a96f5"/></linearGradient></defs><path d="M0 1q0-1 1-1h13v14H0zM15 0h13q1 0 1 1v13H15zM0 15h14v14H1q-1 0-1-1zM15 15h14v13q0 1-1 1H15z" fill="url(#wl)"/></svg>
  <div class="tk-search"><svg viewBox="0 0 20 20"><circle cx="8.500" cy="8.500" r="7" fill="none" stroke="#ddd" stroke-width="1.900"/><path d="M13.500 13.500l5 5" stroke="#ddd" stroke-width="2.200"/></svg>Search
    <svg class="mask" viewBox="0 0 60 32"><g stroke="#3d9fa8" stroke-width="3.200" stroke-linecap="round"><path d="M30 20L2 29M30 20L1 21M30 20L3 13M30 20L9 7M30 20L16 3M30 20L24 1M30 20l28 9M30 20l29 1M30 20l27-7M30 20L51 7M30 20L44 3M30 20L36 1"/></g><g stroke="#1c6a7a" stroke-width="1.200"><path d="M30 20L3 25M30 20L1 17M30 20L6 10M30 20L12 4M30 20L20 1M30 20l27 5M30 20l29-3M30 20l24-10M30 20L48 4M30 20L40 1"/></g><path d="M20 11q10-9 20 0v9q-2 10-10 12-8-2-10-12z" fill="#e9c06a"/><path d="M25 20h10v6q-2 5-5 6-3-1-5-6z" fill="#f3e4dc"/><path d="M22.500 15q3-2 5.500 1-3 2-5.500-1M37.500 15q-3-2-5.500 1 3 2 5.500-1" fill="#3a2418"/><path d="M28 27h4l-2 2z" fill="#c02030"/></svg></div>
  <svg class="k" viewBox="0 0 30 30"><path d="M1 9h20v19H1z" fill="#777"/><path d="M9 1h20v19H9z" fill="#e8e8e8"/><path d="M9 9h12v11H9z" fill="#b5b5b5"/></svg>
  <svg class="k" viewBox="0 0 30 30"><path d="M0 3q0-2 2-2h7l3 3h16q2 0 2 2v4H0z" fill="#e0a11a"/><path d="M0 8q0-2 2-2h26q2 0 2 2v20H0z" fill="#ffcf4a"/><path d="M5 28v-5q0-3 3-3h14q3 0 3 3v5z" fill="#1a80d0"/><path d="M10 24h10" stroke="#0b4f8a" stroke-width="1.500"/></svg>
  <div class="k app"><svg viewBox="0 0 30 30"><use href="#chrome"/></svg><i class="badge photo"></i></div>
  <div class="k app"><svg viewBox="0 0 30 30"><use href="#chrome"/></svg><i class="badge red">R</i></div>
  <svg class="k" viewBox="0 0 30 30"><rect x="1.500" y="1.500" width="27" height="27" rx="2" fill="#0a66c2"/><path d="M6 12h4v13H6z" fill="#fff"/><circle cx="8" cy="7.500" r="2.300" fill="#fff"/><path d="M15 25V12M15 18q1-5 5-4.500t4 5.500v6" fill="none" stroke="#fff" stroke-width="3.700"/></svg>
  <svg class="k" viewBox="0 0 30 30"><path d="M1 4h28v22H1z" fill="#111" stroke="#bbb"/><path d="M1 3.500h28v3H1z" fill="#d4dbe4"/><path d="M4 10h2m2 0h2m2 1h5" stroke="#ccc" stroke-width="1.300"/><path d="M2 14q14-2 26-4v15H2z" fill="#000"/></svg>
  <svg class="k" viewBox="0 0 30 30"><path d="M22 0l7 3v24l-7 3L7 16l-3 3-3-2.500 18-14z" fill="#0f7ccb"/><path d="M22 8v14L12.500 15z" fill="#25251f"/><path d="M4 11l-3 2.500L19 29l3-7z" fill="#1a8ad6"/><path d="M22 0l7 3v24l-7 3z" fill="#35a9f2"/></svg>
  <svg class="k" viewBox="0 0 30 30"><circle cx="15" cy="15" r="14" fill="#2b9fdc"/><path d="M6 15l17-7-3 16-5-4-3 3-1-5 9-7-11 6z" fill="#fff"/></svg>
  <div class="k"><svg viewBox="0 0 30 30"><path d="M1.500 28.500l2-7.500a13 13 0 1 1 5 5z" fill="none" stroke="#2bd366" stroke-width="3"/><path d="M10 8q-4 3 1 9t10 4q2-2 0-3l-3-1-2 2q-3-1-5-5l2-2-1-3q-1-1-2-1z" fill="#2bd366"/></svg><i class="badge blue">34</i></div>
  <div class="k"><svg viewBox="0 0 30 30"><circle cx="15" cy="15" r="14" fill="#0b97db" stroke="#fff" stroke-width="1.500"/><path d="M9.500 11q0-6 6-6t6 5q0 3-3 5-3 2-3 5" fill="none" stroke="#fff" stroke-width="3.500"/><circle cx="15.500" cy="25" r="2.200" fill="#fff"/></svg><i class="badge yellow"></i></div>
  <svg class="k" viewBox="0 0 30 30"><rect x="1" y="1" width="28" height="28" rx="2" fill="#285f87"/><path d="M5 5q5-2 9 4 4 7 7 11l6 4-3 1 2 3q-5-2-8-8-3-6-4-3l-1 5-3-4Q5 14 5 5M21 3l2 4 4-3" fill="none" stroke="#c7dce8" stroke-width="1.300"/></svg>
  <svg class="k" viewBox="0 0 30 30"><circle cx="15" cy="15" r="14" fill="#f4f4f4"/><path d="M15 5q9 10 0 20Q6 15 15 5z" fill="#13994d"/><path d="M15 5q9 10 0 20z" fill="#0b5d38"/></svg>
  <svg class="k" viewBox="0 0 30 30"><circle cx="15" cy="15" r="14.500" fill="#ff6c37"/><path d="M8 24l7-9 5-4-3 6-8 6" fill="#ffe4d8" stroke="#fff"/><circle cx="20.500" cy="8.500" r="3" fill="#fff"/></svg>
  <svg class="k" viewBox="0 0 30 30"><path d="M8 1h20v28H8z" fill="#21a366"/><path d="M18 1h11v9H18z" fill="#33c481"/><path d="M8 10h10v10H8z" fill="#107c41"/><path d="M8 20h21v8H8z" fill="#185c37"/><rect y="8" width="15" height="15" rx="1.500" fill="#107c41"/><path d="M4.500 11.500l6 8M10.500 11.500l-6 8" stroke="#fff" stroke-width="2"/></svg>
  <div class="k pbi"><svg viewBox="0 0 30 30"><path d="M16 1h10q1 0 1 1v27H16z" fill="#e0ab10"/><path d="M9 8h10q1 0 1 1v20H9z" fill="#f2cf3a"/><path d="M2 15h10q1 0 1 1v13H3q-1 0-1-1z" fill="#fbe27a"/></svg></div>
  <div class="tray">
    <svg class="t-up" viewBox="0 0 14 9"><path d="M1 8l6-6 6 6" fill="none" stroke="#eee" stroke-width="1.600"/></svg>
    <svg class="t-cloud" viewBox="0 0 22 20"><path d="M5 14q-4 0-4-4t4-4q2-5 7-4 4 1 5 5 4 1 4 4t-4 3z" fill="#aaa"/><circle cx="14" cy="13" r="5.500" fill="#ddd"/><path d="M12 10.500l4.500 4.500" stroke="#555" stroke-width="1.500"/></svg>
    <span class="lang">ENG<br>IN</span>
    <svg class="t-sys" viewBox="0 0 80 18"><path d="M1 7q8-8 16 0M4 10q5-5 10 0M6.500 13q2.500-2 5 0" fill="none" stroke="#eee" stroke-width="1.500"/><circle cx="9" cy="15.500" r="1.500" fill="#eee"/><path d="M30 6.500h3.500L38 2v14l-4.500-4.500H30zM41 6q2 3 0 6M43.500 4q4 5 0 10M46 2q5 7 0 14" fill="none" stroke="#eee" stroke-width="1.300"/><rect x="60" y="4" width="16" height="10" rx="2" fill="none" stroke="#eee" stroke-width="1.400"/><path d="M62 6h6v6h-6zM77.500 7h1.500v4h-1.500z" fill="#eee"/></svg>
    <span class="clock">9:02 PM<br>2/24/2025</span>
  </div>
</footer>
<script src="matrix.js"></script>
</body>
</html>
```
FILE: styles.css
```css
* { box-sizing: border-box; }
html, body { margin: 0; height: 100%; }
body { width: 1920px; height: 1080px; overflow: hidden; display: flex; flex-direction: column; background: #141414; color: #f2f2f2; font: 15px/20px "Open Sans", "Noto Sans", sans-serif; letter-spacing: -.35px; }
svg { display: block; overflow: visible; flex: none; }
.defs { position: absolute; width: 0; height: 0; }
p, h2, h3 { margin: 0; }
i { font-style: normal; }

.titlebar { height: 42px; display: flex; align-items: center; padding-left: 21px; color: #d6d6d6; flex: none; }
.t-save { width: 19px; height: 19px; }
.t-undo { width: 18px; height: 19px; margin-left: 19px; }
.flip { transform: scaleX(-1); margin-left: 20px; }
.t-name { margin: 6px 0 0 11px; width: 328px; white-space: nowrap; font-size: 14.500px; letter-spacing: -.1px; }
.t-tri { width: 11px; height: 8px; }
.t-search { width: 500px; height: 30px; margin-left: 362px; background: #1f1f1f; border-radius: 3px; display: flex; align-items: center; gap: 14px; padding: 1px 0 0 21px; font-size: 17px; color: #bdbdbd; letter-spacing: -.2px; }
.t-search svg { width: 20px; height: 20px; }
.t-sign { width: 57px; margin: 1px 0 0 326px; font-size: 15px; letter-spacing: -.2px; }
.t-user { width: 26px; height: 26px; }
.t-win { width: 124px; height: 16px; margin: 3px 0 0 41px; }

.menubar { height: 46px; display: flex; padding-left: 27px; font-size: 18px; line-height: 41px; letter-spacing: -.5px; color: #d8d8d8; flex: none; white-space: nowrap; }
.m-file { width: 69px; } .m-insert { width: 73px; } .m-modeling { width: 104px; } .m-view { width: 66px; } .m-opt { width: 99px; } .m-help { width: 64px; } .m-format { width: 89px; }
.m-home { width: 48px; margin-right: 28px; height: 38px; border-bottom: 3px solid #2aac94; font-weight: 700; color: #fff; letter-spacing: -1.050px; }
.m-format, .m-drill { color: #2aac94; font-weight: 600; letter-spacing: -.85px; }
.m-drill { width: 1141px; letter-spacing: -.6px; }
.share { width: 105px; height: 30px; margin-top: 6px; background: #0d6b5a; border-radius: 4px; display: flex; align-items: center; padding: 0 0 1px 9px; line-height: 20px; font-size: 15px; letter-spacing: -.3px; color: #ccc; }
.share svg { width: 20px; height: 18px; margin-right: 10px; }
.share .sh-chev { width: 12px; height: 8px; margin: 0 0 0 6px; }

.ribbon { height: 125px; margin: 0 10px; background: #292929; border-radius: 8px; display: grid; grid-template-columns: 201px 459px 145px 184px 233px 92px 72px 75px 1fr; flex: none; position: relative; z-index: 2; }
.group { margin: 5px 0; border-right: 1px solid #414141; display: flex; flex-direction: column; justify-content: space-between; }
.group footer { text-align: center; font-size: 13px; letter-spacing: -.45px; line-height: 17px; padding-bottom: 5px; }
.btns { display: grid; justify-content: start; }
.g-data .btns { grid-template-columns: 50px 70px 79px 50px 50px 70px 68px; padding-left: 10px; }
.g-query .btns { grid-template-columns: 70px 56px; padding-left: 11px; }
.g-insert .btns { grid-template-columns: 50px 50px 60px; padding-left: 11px; }
.g-calc .btns { grid-template-columns: 97px 56px 64px; padding-left: 7px; }
.g-sens .btns, .g-share .btns, .g-cop .btns { justify-content: center; }
.rb { display: flex; flex-direction: column; align-items: center; padding-top: 5px; text-align: center; white-space: nowrap; font-size: 15px; line-height: 20px; letter-spacing: -.47px; }
.rb > svg { width: 40px; height: 40px; margin-bottom: 1px; }
.rb.low > svg { margin-bottom: 3px; }
.rb .shift { margin-left: 4px; }
.chev { display: inline-block; width: 8px; height: 6px; margin-left: 3px; vertical-align: 1px; }
.dim { color: #5e5e5e; }
.fx { font: italic 24px "Liberation Serif", serif; fill: #ccc; }
.clip { display: grid; grid-template-columns: 65px 1fr; }
.clip .rb { padding-left: 5px; }
.clip-list { display: flex; flex-direction: column; }
.clip-list div { display: flex; align-items: center; gap: 4px; height: 32.500px; font-size: 15px; letter-spacing: -.4px; }
.clip-list div:first-child { height: 30px; }
.clip-list svg { width: 20px; height: 20px; }
.ribbon-end { display: flex; align-items: flex-end; justify-content: flex-end; padding: 0 11px 14px 0; }
.ribbon-end svg { width: 12px; height: 8px; }

.work { height: 777px; display: grid; grid-template-columns: 51px 1417px 227px 225px; flex: none; }
.rail { border-right: 1px solid #4b4b4b; }
.rail div { height: 50px; padding: 11px 0 0 13px; }
.rail .on { border-left: 3px solid #2aac94; padding-left: 10px; }
.rail svg { width: 24px; height: 24px; }
.dax { font: 700 9px "Open Sans", sans-serif; fill: #ccc; }
.center { display: flex; flex-direction: column; }
.stage { height: 733px; display: grid; grid-template-columns: 1376px 41px; background: #fff; }
.canvas { padding: 8px 0 0 366px; border-top: 2px solid #eee; }
.visual { width: 644px; height: 363px; border: 2.500px dotted #555; padding: 0 0 0 5px; }
.frame { position: relative; width: 635px; height: 359px; border: 1px solid #444; overflow: hidden; }
.filters { border-left: 1px solid #bbb; color: #252423; display: flex; flex-direction: column; align-items: center; }
.f-col { width: 11px; height: 11px; margin: 17px 0 0 1px; transform: scaleX(-1); }
.f-ico { width: 12px; height: 12px; margin: 25px 0 10px 8px; }
.filters b { writing-mode: vertical-rl; font-size: 18px; line-height: 22px; font-weight: 600; letter-spacing: -.1px; margin-left: 1px; }

.matrix { position: absolute; left: 1px; top: 1px; table-layout: fixed; border-collapse: separate; border-spacing: 0; font-size: 6.600px; line-height: 10px; letter-spacing: -.1px; color: #555; width: 650px; }
.matrix td, .matrix th { padding: 0 2px; height: 10px; text-align: left; font-weight: 400; white-space: nowrap; border-right: 1px solid #e8f3ff; }
.matrix thead th { height: 16px; border-bottom: 1px solid #9cc9f5; vertical-align: top; padding-top: 1px; border-right: 0; color: #444; }
.matrix tbody th { color: #333; padding-left: 2px; }
.matrix tbody tr:nth-child(even) th { background: #ededed; }
.matrix .total th { background: #fff !important; }
.cell { display: flex; justify-content: space-between; align-items: center; height: 10px; }
.cell svg { width: 10px; height: 10px; }
.cell.cut { justify-content: flex-start; gap: 3px; }
.matrix .total td, .matrix .total th { font-weight: 700; color: #222; text-align: right; letter-spacing: -.15px; border-right: 0; padding-right: 3px; }
.matrix .total th { text-align: left; }
.matrix .total td:last-child { text-align: left; padding-left: 5px; }
.dark { color: #1d3d5c; }
.h { position: absolute; background: #999; }
.tl { left: 0; top: 0; width: 10px; height: 3px; } .tc { left: 309px; top: 0; width: 14px; height: 3px; }
.ml { left: 0; top: 172px; width: 3px; height: 15px; } .mr { right: 0; top: 172px; width: 3px; height: 15px; }
.bl { left: 0; bottom: 0; width: 3px; height: 10px; } .bc { left: 309px; bottom: 0; width: 14px; height: 3px; } .br { right: 0; bottom: 0; width: 3px; height: 10px; }
.hbar { position: absolute; left: 4px; bottom: 2px; width: 313px; height: 3px; background: #b4b4b4; }
.vtools { position: absolute; right: 0; top: 0; display: flex; gap: 5px; }
.vtools span { width: 29.500px; height: 30px; background: #fff; }
.vtools svg { width: 30px; height: 30px; }

.tabs { height: 44px; display: flex; background: #282828; }
.views { width: 160px; border-right: 1.500px solid #777; display: flex; position: relative; align-items: flex-start; }
.v-desk { width: 20px; height: 20px; margin: 9px 0 0 17px; }
.views::after { content: ""; position: absolute; left: 13px; bottom: 5px; width: 30px; height: 4px; border-radius: 2px; background: #2aac94; }
.v-phone { width: 14px; height: 24px; margin: 7px 0 0 38px; }
.v-arr { width: 36px; height: 12px; margin: 15px 0 0 27px; }
.tab { border-left: 1px solid #4a4a4a; text-align: center; line-height: 44px; font-size: 15px; letter-spacing: -.3px; white-space: nowrap; overflow: hidden; padding-right: 1px; }
.tab:nth-child(2) { width: 166px; margin-left: 6px; } .tab:nth-child(3) { width: 254px; } .tab:nth-child(4) { width: 196px; } .tab:nth-child(5) { width: 196px; } .tab:nth-child(6) { width: 180px; } .tab:nth-child(7) { width: 209px; padding-right: 0; }
.tab.active { font-weight: 700; letter-spacing: -.72px; box-shadow: inset 0 -5px #2aac94; }
.add { width: 50px; background: #2aac94; display: grid; place-items: center; padding-bottom: 4px; }
.add svg { width: 14px; height: 14px; }

.viz { border-left: 1px solid #6a6a6a; border-right: 1px solid #6a6a6a; height: 777px; overflow: hidden; display: flex; flex-direction: column; padding-bottom: 10px; }
.p-head { display: flex; justify-content: space-between; align-items: center; padding: 13px 12px 0 10px; height: 38px; flex: none; }
.p-head h2 { font-size: 19px; line-height: 26px; font-weight: 600; letter-spacing: -.2px; }
.p-head svg { width: 11px; height: 11px; }
.viz h3 { font-size: 15px; line-height: 20px; font-weight: 600; padding: 9px 0 5px 10px; letter-spacing: -.4px; }
.modes { display: flex; gap: 44px; padding: 0 0 6px 10px; }
.modes .on { background: #2b2b2b; border-radius: 3px; }
.modes svg { width: 40px; height: 40px; }
.modes div:nth-child(3) svg { margin-left: -2px; }
.notch { width: 225px; height: 12px; }
.gallery { display: grid; grid-template-columns: repeat(6, 35px); grid-auto-rows: 35px; padding: 11px 0 0 14px; height: 291px; border-bottom: 1px solid #eee; flex: none; }
.gallery > svg { width: 23px; height: 23px; }
.gallery .sel { outline: 1px solid #fff; outline-offset: 3px; }
.o { fill: none; stroke: #bdbdbd; stroke-width: 1.300; } .b { fill: #0063b1; stroke: #6cb8f6; stroke-width: 1.100; } .g { fill: #606060; stroke: #8d8d8d; stroke-width: 1; }
.lo { fill: none; stroke: #ccc; stroke-width: 1.200; } .lb { fill: none; stroke: #5ab0ee; stroke-width: 1.400; }
.n { font: 11px "Open Sans", sans-serif; fill: #3c9be6; letter-spacing: -.6px; } .big { font: 20px "Open Sans", sans-serif; fill: #3c9be6; }
.wells { position: relative; flex: 1; overflow: hidden; padding: 0 7px 0 5px; }
.wells p { height: 38px; padding: 11px 0 0 10px; letter-spacing: -.4px; }
.drop { height: 44px; border: 1px dashed #6d6d6d; padding: 3px; margin-bottom: 2.500px; }
.drop div { height: 28px; border: 1px solid #5f5f5f; border-radius: 2px; background: #202020; display: flex; align-items: center; padding: 0 6px 0 5px; }
.drop .c { width: 11px; height: 8px; margin-left: auto; } .drop .k { width: 9px; height: 9px; margin-left: 10px; }
.wells .bold { font-weight: 600; height: 36px; letter-spacing: -.4px; padding-top: 10px; }
.opt { display: flex; justify-content: space-between; align-items: center; height: 33.500px; padding: 0 20px 2px 10px; }
.toggle { width: 40px; height: 20px; border: 1px solid #999; border-radius: 10px; font-size: 11.500px; line-height: 18px; color: #aaa; display: flex; align-items: center; gap: 2px; padding-left: 5px; }
.toggle i { width: 10px; height: 10px; border-radius: 5px; background: #aaa; }
.toggle.on { background: #2aac94; border-color: #2aac94; color: #1c3b35; gap: 4px; } .toggle.on i { background: #222; }
.wells .sbar { position: absolute; right: 0; top: 3px; width: 7px; height: 297px; border-radius: 4px; background: #666; }

.data { overflow: hidden; }
.data .p-head { padding-left: 11px; }
.d-search { height: 30px; margin: 19px 5px 0; border: 1px solid #6a6a6a; border-bottom-color: #999; border-radius: 4px; background: #242424; display: flex; align-items: center; gap: 9px; padding-left: 15px; font-size: 17px; letter-spacing: -.3px; color: #989898; }
.d-search svg { width: 18px; height: 18px; }
.fields { position: relative; height: 672px; overflow: hidden; margin-top: 8px; }
.fld { height: 30px; display: grid; grid-template-columns: 7px 15px 16px 1fr; column-gap: 9px; align-items: center; padding-left: 39px; letter-spacing: -.42px; white-space: nowrap; }
.fld:first-child { margin-top: -19px; }
.fld .cb { grid-column: 2; grid-row: 1; width: 15px; height: 15px; border: 1px solid #9a9a9a; border-radius: 2px; }
.fld svg { grid-column: 3; grid-row: 1; width: 16px; height: 16px; margin-left: 1px; }
.fld .ex, .tab-row .ex { grid-column: 1; width: 8px; height: 12px; margin: 0; }
.fld span { grid-column: 4; grid-row: 1; margin-left: -2px; }
.cb.ck { background: #2aac94; }
.ck::after { content: ""; display: block; width: 9px; height: 4px; margin: 3px 0 0 2px; border: solid #1c4a41; border-width: 0 0 1.300px 1.300px; transform: rotate(-42deg); }
.tab-row { height: 30px; display: flex; align-items: center; padding-left: 20px; letter-spacing: -.4px; }
.tab-row svg { width: 16px; height: 16px; margin: 0 7px 0 8px; }
.fields .sbar { position: absolute; right: 5px; bottom: 0; width: 10px; height: 553px; background: #474747; }

.status { height: 30px; border-top: 1px solid #6a6a6a; display: flex; align-items: center; padding-left: 5px; color: #d0d0d0; flex: none; background: linear-gradient(90deg, #000 9px, #e8e8e8 9px 1026px, #000 1026px) bottom / 100% 1px no-repeat; }
.zoomer { width: 160px; height: 20px; margin-left: auto; margin-top: -2px; }
.pct { width: 34px; margin: -2px 21px 0 9px; font-size: 14.500px; }
.fit { width: 18px; height: 14px; margin-right: 23px; }

.taskbar { height: 60px; border-top: 1px solid #3c3c38; display: flex; align-items: center; padding-left: 24px; flex: none; background: linear-gradient(90deg, #232818 0, #222716 600px, #25241f 720px, #25242a 930px, #25251f 1080px, #2d231a 1350px, #25261a 1500px, #262419 1920px); }
.taskbar .k { width: 30px; height: 30px; margin-right: 25.100px; position: relative; flex: none; }
.weather { display: flex; width: 336.500px; position: relative; font-size: 14.500px; line-height: 20px; margin-top: -2px; letter-spacing: -.3px; }
.weather svg { width: 36px; height: 36px; }
.weather p { margin-left: 4px; } .weather p span { color: #bbb; }
.badge { position: absolute; width: 20px; height: 20px; border-radius: 10px; text-align: center; line-height: 20px; font-size: 13px; letter-spacing: 0; }
.pink { left: 15px; top: -2px; background: #ff99a4; color: #111; }
.taskbar .win { margin-right: 15px; }
.tk-search { width: 275px; height: 40px; border-radius: 20px; background: #3f4335; border: 1px solid #51544a; display: flex; align-items: center; gap: 12px; padding-left: 14px; font-size: 16.500px; color: #d8d8d2; letter-spacing: -.2px; margin-right: 15px; flex: none; }
.tk-search svg { width: 19px; height: 19px; }
.tk-search .mask { width: 60px; height: 32px; margin-left: auto; margin-right: 7px; }
.app::after, .pbi::after { content: ""; position: absolute; left: 11px; bottom: -9px; width: 8px; height: 4px; border-radius: 2px; background: #aaa; }
.photo { left: 17px; top: -7px; background: radial-gradient(ellipse 5px 8px at 50% 55%, #1d2333 80%, #dba88c); }
.red { left: 17px; top: -7px; background: #c0350f; color: #f5c9b8; font-size: 12px; }
.blue { left: 13px; top: -7px; width: 24px; height: 20px; background: #4cc2ff; color: #111; }
.yellow { left: 17px; top: -7px; background: #fdc00f; }
.pbi { box-shadow: 0 0 0 10px #343528; border-radius: 1px; }
.pbi::after { left: 6px; width: 18px; background: #4cc2ff; }
.tray { margin-left: auto; display: flex; align-items: center; padding-right: 24px; font-size: 14.500px; line-height: 20px; letter-spacing: -.4px; }
.t-up { width: 14px; height: 9px; } .t-cloud { width: 22px; height: 20px; margin-left: 22px; }
.lang { width: 46px; margin-left: 14px; text-align: center; }
.t-sys { width: 80px; height: 18px; margin-left: 15px; }
.clock { width: 84px; margin-left: 5px; text-align: right; white-space: nowrap; margin-top: -1px; }
```
FILE: matrix.js
```js
const cols = [["Sub-Category",46],["Canada",46],["Caribbean",45],["Central Africa",45],["Central America",52],["Central Asia",41],["Central US",45],["Eastern Africa",46],["Eastern Asia",48],["Eastern Europe",50],["Eastern US",48],["North",45],["Northern Europe",55],["",38]];
const rows = `Accessories|4,473.21|20,291.52|7,686.60|84,218.66|2,244.00|33,956.08|5,921.87|39,755.14|16,464.66|45,033.37|13,192.84|38,208.43|d40
Appliances|7,940.43|30,064.58|8,669.16|100,282.02|2,480.54|23,518.95|11,244.90|58,059.75|21,028.71|34,116.65|23,253.12|58,488.77|h90:1
Art|4,119.54|6,083.81|7,136.49|23,731.29|1,188.09|5,652.06|6,534.69|16,578.77|14,639.94|7,319.40|11,636.85|30,855.79|d40
Binders|3,089.34|8,463.58|3,384.51|24,656.92|480.02|56,923.28|3,679.76|14,776.83|8,525.46|53,487.47|7,986.63|19,159.08|d40
Bookcases|5,734.02|39,358.36|15,561.42|172,228.25|1,384.90|24,157.18|16,946.53|130,066.92|40,160.16|43,819.33|26,039.10|85,143.29|u150:1
Chairs|3,203.37|45,187.12|8,819.25|161,573.83|1,607.73|85,230.65|7,948.04|129,960.25|27,340.50|96,260.68|14,765.76|39,655.86|u175:1
Copiers|7,465.53|50,000.33|13,346.43|176,245.92|740.76|37,259.57|11,106.63|123,331.20|33,475.71|53,219.46|28,934.01|77,585.32|u165:1
Envelopes|567.18|6,341.28|1,576.41|22,969.34|356.86|4,204.88|1,680.82|13,933.11|4,072.53|3,631.54|3,369.45|10,474.47|d12
Fasteners|479.46|3,344.13|1,072.80|10,637.39|267.68|2,483.97|1,107.39|7,297.35|2,482.11|2,832.36|1,748.28|4,411.17|d8
Furnishings|808.53|10,165.61|4,731.21|32,801.70|174.95|15,149.78|3,251.28|22,056.99|12,497.37|28,982.23|6,812.91|9,855.26|d25
Labels|421.74|2,197.38|1,060.59|7,919.30|218.90|2,444.54|1,013.40|5,186.77|1,730.91|2,573.46|1,484.04|3,142.13|d6
Machines|4,274.46|5,164.50|15,184.83|22,638.19|1,739.22|26,797.38|10,804.48|48,832.68|22,411.89|66,106.17|18,691.68|56,500.05|d55
Paper|1,519.53|7,185.60|2,523.96|20,431.14|296.61|16,694.53|1,523.14|14,243.53|4,443.33|19,467.42|5,406.60|7,013.14|d15
Phones|10,085.61|40,876.70|25,472.13|178,567.52|3,466.75|72,403.28|16,349.62|103,471.74|35,906.67|100,614.98|25,917.33|89,715.53|h120:1
Storage|10,587.30|18,670.07|17,962.86|86,216.23|2,117.07|45,813.80|21,999.76|55,625.22|41,420.88|71,510.56|26,375.43|71,338.15|d60
Supplies|1,309.56|7,224.98|1,958.40|22,599.35|547.38|9,395.00|2,493.62|17,582.70|5,308.74|10,666.35|4,280.01|11,244.86|d10
Tables|849.36|23,661.31|7,482.96|75,383.58||39,154.97|4,250.10|54,300.43|18,123.87|39,139.81|13,359.54|33,028.11|d50`.split("\n").map(r => r.split("|"));
const totals = ["Total","66,928.17","324,280.86","143,630.01","1,223,100.63","19,311.46","501,239.89","127,856.02","855,059.39","310,033.44","678,781.24","233,216.61","636,779.16","1,10"];

// Scale from pale to saturated blue
function shade(v) {
  const t = Math.min(1, v / 178567);
  const mix = (a, b) => Math.round(a + (b - a) * t);
  return `rgb(${mix(222, 46)},${mix(239, 150)},255)`;
}
const icon = name => `<svg><use href="#${name}"/></svg>`;
const kinds = { d: "down", h: "half", u: "up" };

function cell(text, index) {
  if (index === 13) {
    const [, kind, amount, shown = ""] = text.match(/^(\w)(\d+):?(.*)$/);
    return `<td style="background:${shade(amount * 1000)}"><div class="cell cut">${icon(kinds[kind])}<span>${shown}</span></div></td>`;
  }
  if (!text) return `<td style="background:${shade(0)}"></td>`;
  const v = parseFloat(text.replace(/,/g, ""));
  const name = v > 135000 ? "up" : v > 70000 ? "half" : "down";
  return `<td class="${v > 95000 ? "dark" : ""}" style="background:${shade(v)}"><div class="cell">${icon(name)}<span>${text}</span></div></td>`;
}

const table = document.querySelector(".matrix");
table.querySelector("colgroup").innerHTML = cols.map(c => `<col style="width:${c[1]}px">`).join("");
table.querySelector("thead").innerHTML = `<tr>${cols.map(c => `<th>${c[0]}</th>`).join("")}</tr>`;
table.querySelector("tbody").innerHTML = rows.map(r => `<tr><th>${r[0]}</th>${r.slice(1).map((t, i) => cell(t, i + 1)).join("")}</tr>`).join("")
  + `<tr class="total"><th>${totals[0]}</th>${totals.slice(1).map(t => `<td>${t}</td>`).join("")}</tr>`;
```
